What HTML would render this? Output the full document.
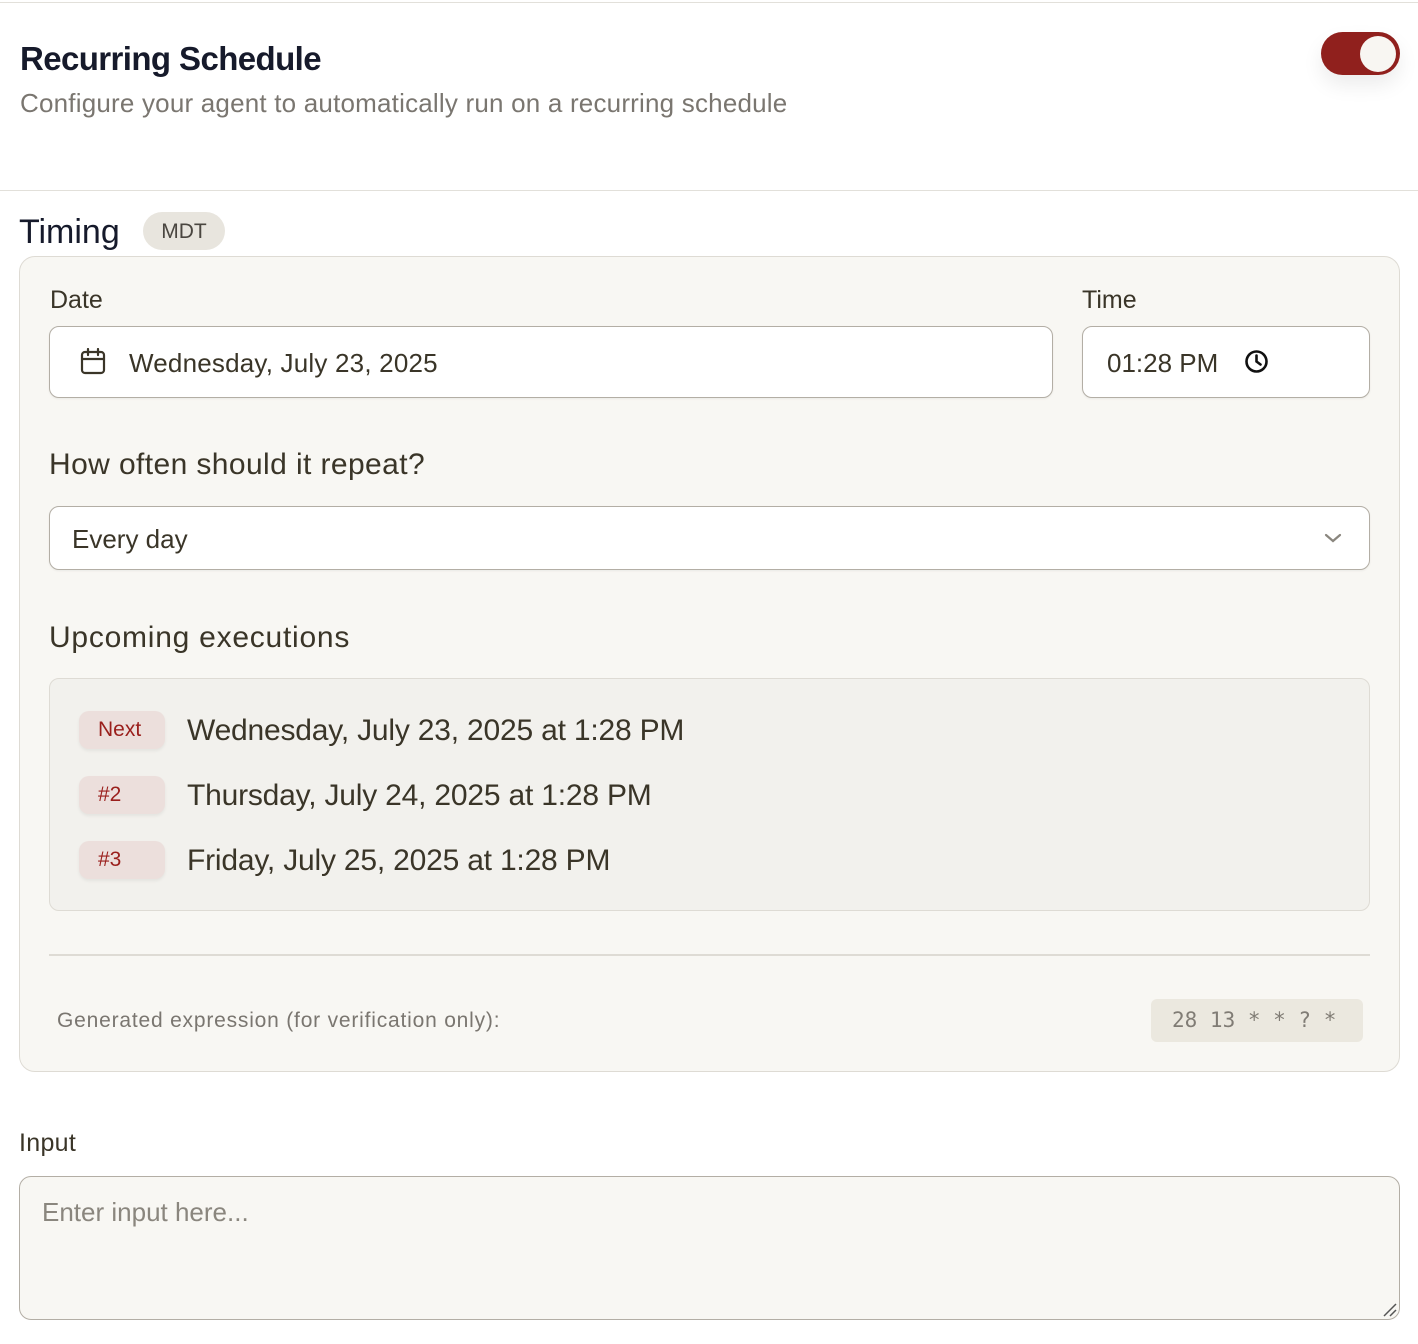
<!DOCTYPE html>
<html><head><meta charset="utf-8"><style>
*{box-sizing:border-box;margin:0;padding:0}
body{width:1418px;height:1344px;background:#fff;font-family:"Liberation Sans",sans-serif;color:#3a3528;position:relative;overflow:hidden}
.a{position:absolute;white-space:nowrap}
.box{position:absolute;background:#fff;border:1px solid #b3aea5;border-radius:10px;box-shadow:0 1px 2px rgba(0,0,0,.06)}
.badge{position:absolute;left:79px;width:86px;height:38px;background:#ecdfdc;border-radius:10px;color:#9a1f1c;font-size:21px;line-height:38px;box-shadow:0 2px 3px rgba(0,0,0,.06)}
.row{position:absolute;left:187px;font-size:30px;color:#3a3528;letter-spacing:-0.2px}
</style></head><body>
<div class="a" style="left:0;top:2px;width:1418px;height:1px;background:#e2e0da"></div>
<div class="a" style="left:20px;top:40px;font-size:33px;font-weight:bold;color:#161a2b;letter-spacing:-0.6px">Recurring Schedule</div>
<div class="a" style="left:20px;top:88px;font-size:26px;color:#7a7670;letter-spacing:0.2px">Configure your agent to automatically run on a recurring schedule</div>
<div class="a" style="left:1321px;top:32px;width:79px;height:43px;border-radius:22px;background:#90201d;box-shadow:0 10px 20px rgba(0,0,0,.08)"></div>
<div class="a" style="left:1360px;top:36px;width:36px;height:36px;border-radius:50%;background:#f8f6f2"></div>
<div class="a" style="left:0;top:190px;width:1418px;height:1px;background:#e2e0da"></div>
<div class="a" style="left:19px;top:213px;font-size:34px;color:#161a2b">Timing</div>
<div class="a" style="left:143px;top:212px;width:82px;height:38px;border-radius:19px;background:#e8e5de;color:#4a4640;font-size:21px;line-height:40px;text-align:center">MDT</div>
<div class="a" style="left:19px;top:256px;width:1381px;height:816px;background:#f8f7f3;border:1px solid #dedbd4;border-radius:16px"></div>
<div class="a" style="left:50px;top:286px;font-size:25px">Date</div>
<div class="a" style="left:1082px;top:286px;font-size:25px">Time</div>
<div class="box" style="left:49px;top:326px;width:1004px;height:72px"></div>
<svg class="a" style="left:80px;top:348px" width="27" height="28" viewBox="0 0 27 28" fill="none" stroke="#3a3528" stroke-width="2.2" stroke-linecap="round"><rect x="2" y="4" width="22" height="21" rx="3"/><path d="M2 11h22M8 1v6M18 1v6"/></svg>
<div class="a" style="left:129px;top:348px;font-size:26px;letter-spacing:0.2px">Wednesday, July 23, 2025</div>
<div class="box" style="left:1082px;top:326px;width:288px;height:72px"></div>
<div class="a" style="left:1107px;top:348px;font-size:26px">01:28 PM</div>
<svg class="a" style="left:1244px;top:349px" width="25" height="25" viewBox="0 0 25 25" fill="none" stroke="#111" stroke-width="2.6" stroke-linecap="round"><circle cx="12.5" cy="12.5" r="10"/><path d="M12.5 6.5v6l4 3"/></svg>
<div class="a" style="left:49px;top:448px;font-size:30px;letter-spacing:0.4px">How often should it repeat?</div>
<div class="box" style="left:49px;top:506px;width:1321px;height:64px"></div>
<div class="a" style="left:72px;top:524px;font-size:26px">Every day</div>
<svg class="a" style="left:1324px;top:532px" width="18" height="12" viewBox="0 0 18 12" fill="none" stroke="#8a867e" stroke-width="2.2" stroke-linecap="round"><path d="M2 3l7 6 7-6"/></svg>
<div class="a" style="left:49px;top:621px;font-size:30px;letter-spacing:0.75px">Upcoming executions</div>
<div class="a" style="left:49px;top:678px;width:1321px;height:233px;background:#f2f1ed;border:1px solid #dedbd4;border-radius:10px"></div>
<div class="badge" style="top:711px;padding-left:19px">Next</div>
<div class="row" style="top:714px">Wednesday, July 23, 2025 at 1:28 PM</div>
<div class="badge" style="top:776px;padding-left:19px">#2</div>
<div class="row" style="top:779px">Thursday, July 24, 2025 at 1:28 PM</div>
<div class="badge" style="top:841px;padding-left:19px">#3</div>
<div class="row" style="top:844px">Friday, July 25, 2025 at 1:28 PM</div>
<div class="a" style="left:49px;top:954px;width:1321px;height:2px;background:#dedbd4"></div>
<div class="a" style="left:57px;top:1009px;font-size:21px;color:#7a7670;letter-spacing:0.8px">Generated expression (for verification only):</div>
<div class="a" style="left:1151px;top:999px;width:212px;height:43px;background:#ebe8df;border-radius:6px;font-family:'DejaVu Sans Mono',monospace;font-size:21px;color:#807c75;line-height:43px;padding-left:21px">28 13 * * ? *</div>
<div class="a" style="left:19px;top:1129px;font-size:25px;letter-spacing:0.3px">Input</div>
<div class="a" style="left:19px;top:1176px;width:1381px;height:144px;background:#f8f7f3;border:1.5px solid #b3aea5;border-radius:12px"></div>
<div class="a" style="left:42px;top:1197px;font-size:26px;color:#8a867e">Enter input here...</div>
<svg class="a" style="left:1382px;top:1302px" width="16" height="16" viewBox="0 0 16 16" stroke="#555" stroke-width="1.5"><path d="M2 14L14 2M8 14l6-6"/></svg>
</body></html>
